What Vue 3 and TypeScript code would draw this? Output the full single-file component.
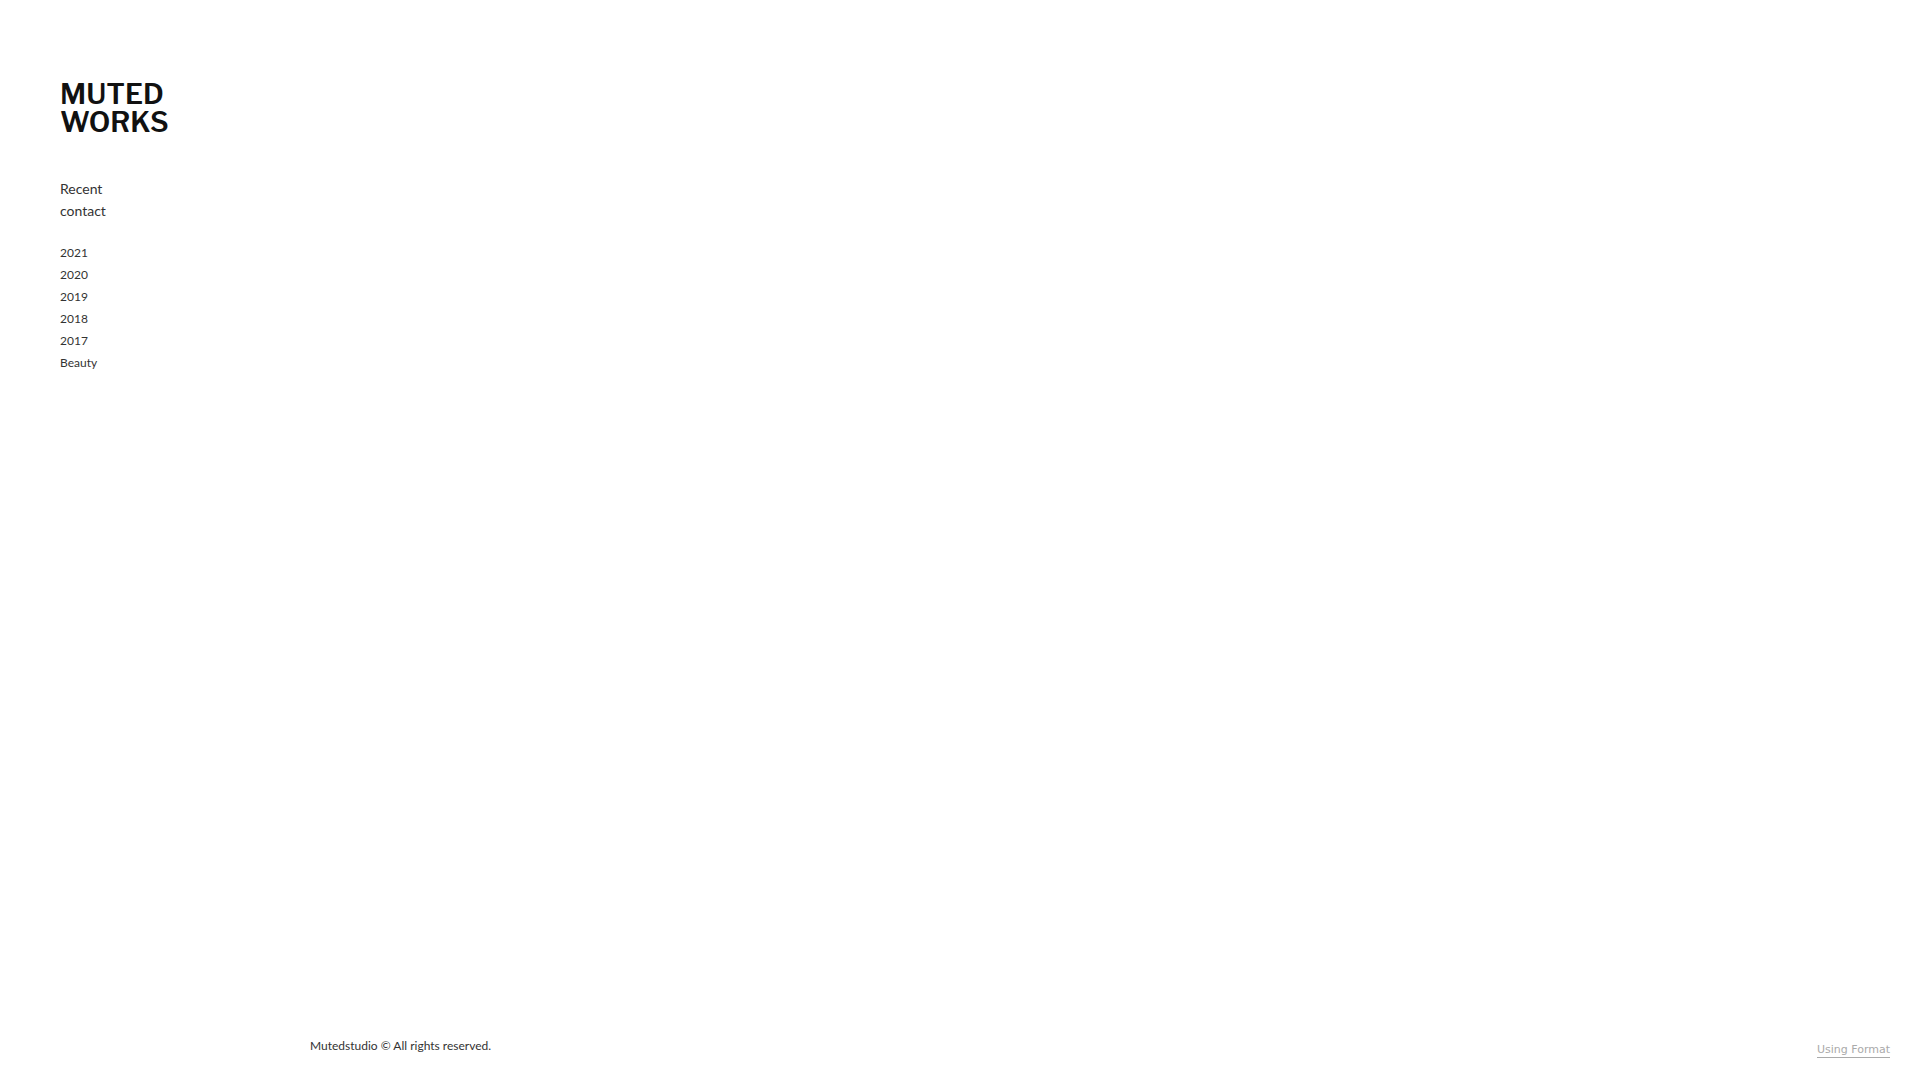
<script setup lang="ts">
const primary: string[] = ['Recent', 'contact']
const galleries: string[] = ['2021', '2020', '2019', '2018', '2017', 'Beauty']
</script>

<template>
  <div class="page">
    <header class="sidebar">
      <h1 class="logo"><a href="#">MUTED<br />WORKS</a></h1>
      <nav>
        <ul class="menu">
          <li v-for="item in primary" :key="item"><a href="#">{{ item }}</a></li>
        </ul>
        <ul class="menu galleries">
          <li v-for="item in galleries" :key="item"><a href="#">{{ item }}</a></li>
        </ul>
      </nav>
    </header>
    <main class="content"></main>
    <footer class="footer">
      <p class="copyright">Mutedstudio © All rights reserved.</p>
      <a class="credit" href="#">Using Format</a>
    </footer>
  </div>
</template>

<style>
body {
  margin: 0;
  background: #fff;
}
</style>

<style scoped>
.page {
  display: grid;
  grid-template-columns: 250px 1fr;
  grid-template-rows: 1fr auto;
  box-sizing: border-box;
  min-height: 100vh;
  padding: 80px 30px 22px 60px;
  color: #333;
  font-family: Lato, sans-serif;
}
a {
  color: inherit;
  text-decoration: none;
}
.logo {
  margin: 0 0 42px;
  color: #111;
  font: 600 28px/28px "Libre Franklin", "Liberation Sans", sans-serif;
}
.menu {
  margin: 0 0 20px;
  padding: 0;
  list-style: none;
  font-size: 14px;
  line-height: 22px;
}
.galleries {
  font-size: 12px;
}
.footer {
  grid-column: 2;
  display: flex;
  justify-content: space-between;
  align-items: flex-end;
}
.copyright {
  margin: 0;
  font-size: 12px;
  line-height: 24px;
}
.credit {
  border-bottom: 1px solid #aaa;
  color: #aaa;
  font: 11px/14px "DejaVu Sans", sans-serif;
}
</style>
